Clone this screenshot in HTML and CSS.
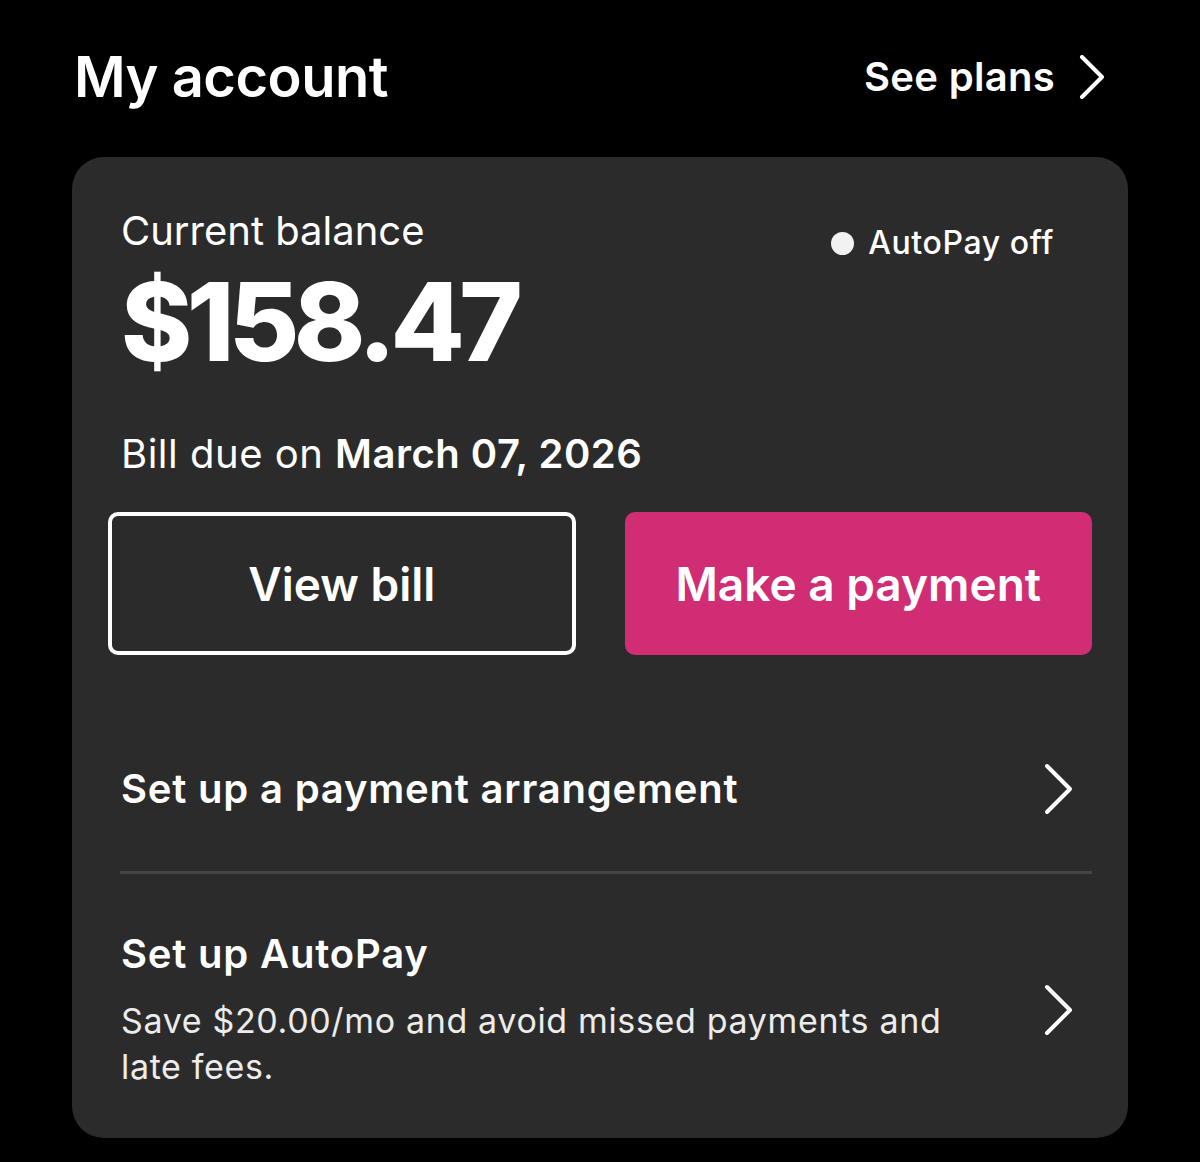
FILE: index.html
```html
<!DOCTYPE html>
<html lang="en">
<head>
<meta charset="UTF-8">
<meta name="viewport" content="width=device-width, initial-scale=1.0">
<title>My account</title>
<link rel="stylesheet" href="styles.css">
</head>
<body>
<div class="header">
    <h1 class="title">My account</h1>
    <a class="see-plans" href="#">
        <span>See plans</span>
        <svg class="chevron-sm" viewBox="0 0 26 44" width="26" height="44"><polyline points="3,2 23,22 3,42" /></svg>
    </a>
</div>

<div class="card">
    <div class="balance-row">
        <div class="balance">
            <div class="balance-label">Current balance</div>
            <div class="balance-amount">$158.47</div>
        </div>
        <div class="autopay-status"><span class="dot"></span>AutoPay off</div>
    </div>

    <p class="due">Bill due on <strong>March 07, 2026</strong></p>

    <div class="actions">
        <button class="btn btn-outline">View bill</button>
        <button class="btn btn-primary">Make a payment</button>
    </div>

    <div class="link-row first">
        <div class="link-text">
            <div class="link-title">Set up a payment arrangement</div>
        </div>
        <svg class="chevron" viewBox="0 0 30 52" width="30" height="52"><polyline points="3,3 26,26 3,49" /></svg>
    </div>

    <div class="divider"></div>

    <div class="link-row last">
        <div class="link-text">
            <div class="link-title">Set up AutoPay</div>
            <div class="link-desc">Save $20.00/mo and avoid missed payments and late fees.</div>
        </div>
        <svg class="chevron" viewBox="0 0 30 52" width="30" height="52"><polyline points="3,3 26,26 3,49" /></svg>
    </div>
</div>
</body>
</html>
```

FILE: styles.css
```css
body {
    margin: 0;
    background: #000;
    color: #fff;
    font-family: Inter, "Noto Sans", sans-serif;
}

.header {
    display: flex;
    align-items: center;
    justify-content: space-between;
    padding: 45px 95px 0 74px;
}

.title {
    margin: 0;
    font-size: 56px;
    line-height: 64px;
    font-weight: 600;
    letter-spacing: -0.5px;
}

.see-plans {
    display: flex;
    align-items: center;
    gap: 24px;
    color: #fff;
    text-decoration: none;
    font-size: 40px;
    font-weight: 600;
    line-height: 48px;
    letter-spacing: 0.3px;
}

.chevron-sm polyline,
.chevron polyline {
    fill: none;
    stroke: #fff;
    stroke-width: 4;
    stroke-linecap: round;
    stroke-linejoin: round;
}

.card {
    margin: 48px 72px 0;
    background: #2b2b2b;
    border-radius: 32px;
    padding: 50px 36px 48px;
}

.balance-row {
    display: flex;
    justify-content: space-between;
    align-items: flex-start;
    padding-left: 13px;
}

.balance-label {
    font-size: 40px;
    line-height: 48px;
    font-weight: 400;
}

.balance-amount {
    margin-top: 12px;
    font-size: 108px;
    line-height: 110px;
    font-weight: 800;
    letter-spacing: -5.5px;
}

.autopay-status {
    display: flex;
    align-items: center;
    gap: 14px;
    margin: 16px 38px 0 0;
    font-size: 32px;
    line-height: 40px;
    font-weight: 500;
    letter-spacing: 0.6px;
}

.dot {
    width: 23px;
    height: 23px;
    border-radius: 50%;
    background: #f2f2f2;
}

.due {
    margin: 53px 0 0;
    padding-left: 13px;
    font-size: 40px;
    line-height: 48px;
    letter-spacing: 0.5px;
}

.due strong {
    font-weight: 600;
}

.actions {
    display: grid;
    grid-template-columns: 1fr 1fr;
    gap: 49px;
    margin-top: 34px;
}

.btn {
    height: 143px;
    border-radius: 10px;
    font-family: inherit;
    font-size: 46px;
    font-weight: 600;
    color: #fff;
    cursor: pointer;
}

.btn-outline {
    background: transparent;
    border: 4px solid #fff;
}

.btn-primary {
    background: #d12d74;
    border: none;
}

.link-row {
    display: flex;
    align-items: center;
    justify-content: space-between;
    padding: 0 18px 0 13px;
}

.link-row.first {
    margin-top: 108px;
    padding-bottom: 56px;
}

.divider {
    margin-left: 12px;
    height: 3px;
    background: #454545;
}

.link-row.last {
    padding-top: 56px;
}

.link-title {
    font-size: 40px;
    line-height: 48px;
    font-weight: 600;
    letter-spacing: 0.8px;
}

.link-desc {
    max-width: 850px;
    margin-top: 20px;
    font-size: 34px;
    line-height: 46px;
    color: #ececec;
    letter-spacing: 0.65px;
}
```
